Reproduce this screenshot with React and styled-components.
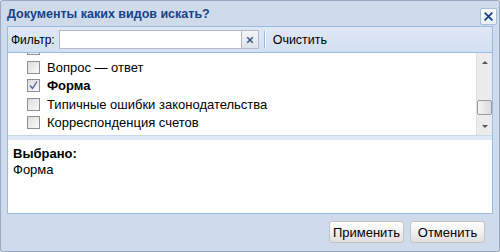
import React from 'react';
import styled, { createGlobalStyle } from 'styled-components';

const GlobalStyle = createGlobalStyle`
    html, body {
        margin: 0;
        padding: 0;
        background: #fff;
    }
    body {
        font-family: "Liberation Sans", Arial, sans-serif;
        font-size: 12px;
        color: #000;
    }
    * {
        box-sizing: border-box;
    }
`;

const Window = styled.div`
    width: 500px;
    height: 252px;
    display: flex;
    flex-direction: column;
    background: #cfdbea;
    border: 1px solid #99a9c2;
    border-radius: 2px;
`;

const Header = styled.div`
    height: 25px;
    flex: none;
    display: flex;
    align-items: center;
    justify-content: space-between;
    padding: 0 2px 0 6px;
    h1 {
        margin: 0;
        font-size: 12.5px;
        font-weight: bold;
        color: #15428b;
    }
`;

const CloseButton = styled.button`
    width: 17px;
    height: 17px;
    margin-top: 5px;
    padding: 0;
    display: flex;
    align-items: center;
    justify-content: center;
    background: linear-gradient(#ffffff, #e8eef7);
    border: 1px solid #a9bfd6;
    border-radius: 2px;
    svg {
        display: block;
    }
`;

const Panel = styled.div`
    margin: 0 6px;
    height: 188px;
    flex: none;
    display: flex;
    flex-direction: column;
    border: 1px solid #99bbe8;
    background: #fff;
`;

const Toolbar = styled.div`
    height: 26px;
    flex: none;
    display: flex;
    align-items: center;
    padding: 0 3px;
    background: linear-gradient(#dfe8f6, #d2e0f1);
    border-bottom: 1px solid #99bbe8;
    label {
        margin-right: 4px;
    }
`;

const SearchField = styled.div`
    display: flex;
    height: 19px;
    input {
        width: 182px;
        height: 19px;
        border: 1px solid #b5b8c8;
        border-right: none;
        background: #fff;
        padding: 0 3px;
        font: inherit;
        outline: none;
    }
`;

const ClearButton = styled.span`
    width: 18px;
    height: 19px;
    display: flex;
    align-items: center;
    justify-content: center;
    border: 1px solid #b5b8c8;
    background: linear-gradient(#f4f6f8, #dde3ea);
`;

const ToolSeparator = styled.span`
    width: 2px;
    height: 17px;
    margin: 0 5px;
    border-left: 1px solid #99bbe8;
    border-right: 1px solid #fff;
`;

const ToolButton = styled.span`
    padding: 0 2px;
    font-size: 12.5px;
`;

const ListArea = styled.div`
    height: 82px;
    flex: none;
    display: flex;
    overflow: hidden;
`;

const List = styled.ul`
    flex: 1;
    list-style: none;
    margin: -13.75px 0 0 0;
    padding: 0 0 0 19px;
`;

const Item = styled.li`
    height: 18.5px;
    display: flex;
    align-items: center;
    gap: 7px;
    font-weight: ${p => (p.$checked ? 'bold' : 'normal')};
    font-size: 13px;
    color: #000;
`;

const Box = styled.span`
    width: 13px;
    height: 13px;
    flex: none;
    border: 1px solid #8f8f8f;
    background: linear-gradient(135deg, #dcdcdc, #fbfbfb);
    display: flex;
    align-items: center;
    justify-content: center;
`;

const Scrollbar = styled.div`
    width: 16px;
    display: flex;
    flex-direction: column;
    align-items: center;
    background: #ececec;
    border-left: 1px solid #e2e2e2;
    padding-top: 8px;
`;

const Thumb = styled.span`
    width: 15px;
    height: 15px;
    margin-top: 36px;
    border: 1px solid #9a9a9a;
    border-radius: 2px;
    background: linear-gradient(90deg, #f4f4f4, #dcdcdc);
`;

const Arrow = styled.span`
    width: 0;
    height: 0;
    border-left: 3px solid transparent;
    border-right: 3px solid transparent;
    ${p => (p.$down
        ? 'border-top: 3px solid #555; margin-top: 10px;'
        : 'border-bottom: 3px solid #555;')}
`;

const Splitter = styled.div`
    height: 5px;
    flex: none;
    background: #dfe8f6;
    border-top: 1px solid #c9d8ee;
`;

const Selected = styled.div`
    flex: 1;
    padding: 6px 5px;
    font-size: 13px;
    line-height: 16px;
    h2 {
        margin: 0;
        font-size: 13px;
        font-weight: bold;
    }
`;

const Footer = styled.div`
    flex: 1;
    display: flex;
    justify-content: flex-end;
    align-items: flex-start;
    gap: 6px;
    padding: 7px 14px 0 0;
`;

const Button = styled.button`
    height: 22px;
    width: 75px;
    padding: 0;
    font: inherit;
    font-size: 13px;
    color: #000;
    border: 1px solid #c4c4c4;
    border-radius: 3px;
    background: linear-gradient(#ffffff 0%, #f1f1f1 50%, #dfdfdf 100%);
`;

const items = [
    { label: '', checked: false },
    { label: 'Вопрос — ответ', checked: false },
    { label: 'Форма', checked: true },
    { label: 'Типичные ошибки законодательства', checked: false },
    { label: 'Корреспонденция счетов', checked: false },
];

const CrossIcon = ({ size, color, width }) => (
    <svg width={size} height={size} viewBox="0 0 10 10">
        <path d="M1.5 1.5 L8.5 8.5 M8.5 1.5 L1.5 8.5" stroke={color} strokeWidth={width} fill="none" />
    </svg>
);

export default function App() {
    return (
        <>
            <GlobalStyle />
            <Window>
                <Header>
                    <h1>Документы каких видов искать?</h1>
                    <CloseButton aria-label="Закрыть">
                        <CrossIcon size={11} color="#15428b" width={1.6} />
                    </CloseButton>
                </Header>
                <Panel>
                    <Toolbar>
                        <label>Фильтр:</label>
                        <SearchField>
                            <input type="text" />
                            <ClearButton>
                                <CrossIcon size={8} color="#3b5a86" width={2} />
                            </ClearButton>
                        </SearchField>
                        <ToolSeparator />
                        <ToolButton>Очистить</ToolButton>
                    </Toolbar>
                    <ListArea>
                        <List>
                            {items.map((item, i) => (
                                <Item key={i} $checked={item.checked}>
                                    <Box>
                                        {item.checked && (
                                            <svg width="9" height="9" viewBox="0 0 9 9">
                                                <path d="M1 4.5 L3.5 7.5 L8 0.5" stroke="#4b5d9a" strokeWidth="1.3" fill="none" />
                                            </svg>
                                        )}
                                    </Box>
                                    {item.label}
                                </Item>
                            ))}
                        </List>
                        <Scrollbar>
                            <Arrow />
                            <Thumb />
                            <Arrow $down />
                        </Scrollbar>
                    </ListArea>
                    <Splitter />
                    <Selected>
                        <h2>Выбрано:</h2>
                        <div>Форма</div>
                    </Selected>
                </Panel>
                <Footer>
                    <Button>Применить</Button>
                    <Button>Отменить</Button>
                </Footer>
            </Window>
        </>
    );
}
